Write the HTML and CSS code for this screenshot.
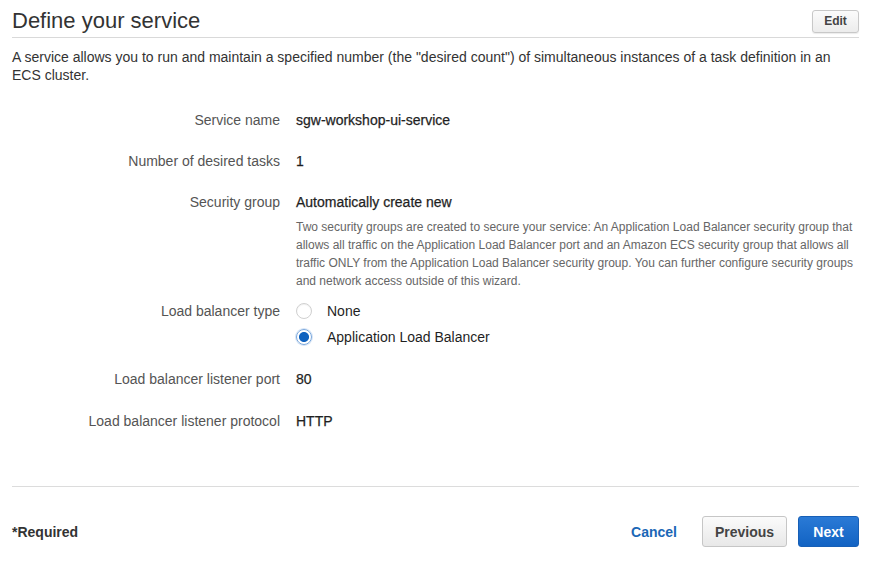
FILE: index.html
```html
<!DOCTYPE html>
<html>
<head>
<meta charset="utf-8">
<link rel="stylesheet" href="styles.css">
</head>
<body>
  <div class="header">
    <h1 class="title">Define your service</h1>
    <button class="btn btn-small">Edit</button>
  </div>
  <p class="intro">A service allows you to run and maintain a specified number (the "desired count") of simultaneous instances of a task definition in an ECS cluster.</p>

  <div class="form">
    <div class="field">
      <div class="label">Service name</div>
      <div class="value">sgw-workshop-ui-service</div>
    </div>
    <div class="field gap-23">
      <div class="label">Number of desired tasks</div>
      <div class="value">1</div>
    </div>
    <div class="field gap-23">
      <div class="label">Security group</div>
      <div>
        <div class="value">Automatically create new</div>
        <p class="help">Two security groups are created to secure your service: An Application Load Balancer security group that allows all traffic on the Application Load Balancer port and an Amazon ECS security group that allows all traffic ONLY from the Application Load Balancer security group. You can further configure security groups and network access outside of this wizard.</p>
      </div>
    </div>
    <div class="field gap-12">
      <div class="label">Load balancer type</div>
      <div class="options">
        <div class="option"><span class="radio"></span><span class="opt-text">None</span></div>
        <div class="option"><span class="radio checked"></span><span class="opt-text">Application Load Balancer</span></div>
      </div>
    </div>
    <div class="field gap-24">
      <div class="label">Load balancer listener port</div>
      <div class="value">80</div>
    </div>
    <div class="field gap-24">
      <div class="label">Load balancer listener protocol</div>
      <div class="value">HTTP</div>
    </div>
  </div>

  <div class="rule"></div>

  <div class="footer">
    <span class="required">*Required</span>
    <div class="actions">
      <a class="cancel">Cancel</a>
      <button class="btn btn-default">Previous</button>
      <button class="btn btn-primary">Next</button>
    </div>
  </div>
</body>
</html>
```

FILE: styles.css
```css
html, body {
  margin: 0;
  background: #ffffff;
}
body {
  padding: 0 18px 0 12px;
  font-family: "Liberation Sans", Arial, Helvetica, sans-serif;
  color: #333333;
}
.header {
  display: flex;
  justify-content: space-between;
  align-items: center;
  height: 38px;
  padding-top: 5px;
  box-sizing: border-box;
  border-bottom: 1px solid #d9d9d9;
}
.title {
  margin: 0;
  font-size: 22px;
  font-weight: normal;
  color: #333333;
  line-height: 26px;
}
.btn {
  font-family: "Liberation Sans", Arial, Helvetica, sans-serif;
  font-weight: bold;
  border-radius: 3px;
  box-sizing: border-box;
  cursor: pointer;
}
.btn-small {
  height: 23px;
  width: 47px;
  padding: 0;
  font-size: 12px;
  color: #444444;
  background: linear-gradient(#fbfbfb, #ececec);
  border: 1px solid #c8c8c8;
  box-shadow: 0 1px 1px rgba(0,0,0,0.08);
}
.intro {
  margin: 10px 0 0;
  font-size: 14px;
  line-height: 18px;
  color: #333333;
}
.form {
  margin-top: 27px;
}
.field {
  display: grid;
  grid-template-columns: 268px 1fr;
  column-gap: 16px;
  font-size: 14px;
  line-height: 18px;
}
.gap-23 { margin-top: 23px; }
.gap-24 { margin-top: 24px; }
.gap-12 { margin-top: 12px; }
.label {
  text-align: right;
  color: #545454;
}
.value {
  color: #1f1f1f;
  -webkit-text-stroke: 0.25px #1f1f1f;
}
.help {
  margin: 7px 0 0;
  font-size: 12px;
  line-height: 18px;
  color: #666666;
}
.options {
  display: flex;
  flex-direction: column;
  gap: 8px;
}
.option {
  display: flex;
  align-items: center;
  gap: 15px;
  height: 18px;
}
.opt-text {
  color: #1f1f1f;
}
.radio {
  width: 16px;
  height: 16px;
  border-radius: 50%;
  box-sizing: border-box;
  border: 1px solid #d0d0d0;
  background: #ffffff;
  box-shadow: inset 0 1px 1px rgba(0,0,0,0.06);
  flex: none;
}
.radio.checked {
  border: 1px solid #7aa7dc;
  background: radial-gradient(circle, #0f62bf 0, #0f62bf 4.6px, #ffffff 5.4px);
  box-shadow: 0 0 0 1px rgba(90,150,220,0.25);
}
.rule {
  margin-top: 56px;
  border-top: 1px solid #dcdcdc;
}
.footer {
  display: flex;
  justify-content: space-between;
  align-items: center;
  margin-top: 29px;
  height: 31px;
}
.required {
  font-size: 14px;
  font-weight: bold;
  color: #333333;
}
.actions {
  display: flex;
  align-items: center;
}
.cancel {
  font-size: 14px;
  font-weight: bold;
  color: #1b67b6;
  margin-right: 25px;
}
.btn-default {
  height: 31px;
  width: 85px;
  padding: 0;
  font-size: 14px;
  color: #444444;
  background: linear-gradient(#fbfbfb, #e8e8e8);
  border: 1px solid #c6c6c6;
  margin-right: 11px;
}
.btn-primary {
  height: 31px;
  width: 61px;
  padding: 0;
  font-size: 14px;
  color: #ffffff;
  background: linear-gradient(#2a7ad6, #1263c3);
  border: 1px solid #175fb6;
}
```
